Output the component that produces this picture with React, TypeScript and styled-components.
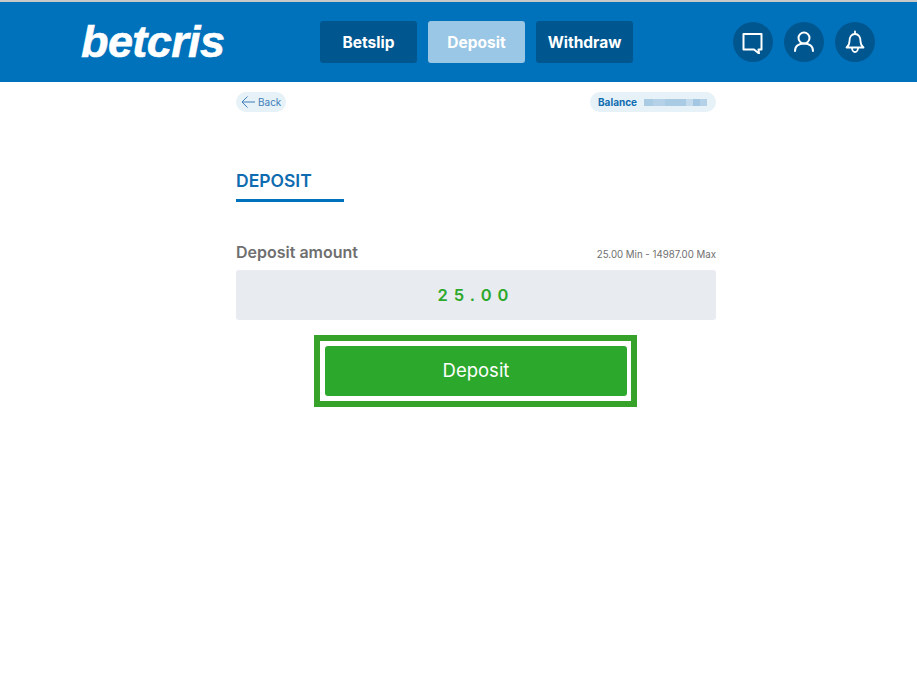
import * as React from 'react';
import styled, {createGlobalStyle} from 'styled-components';

const GlobalStyle = createGlobalStyle`
  html, body {
    margin: 0;
    padding: 0;
    background: #fff;
  }
  body {
    font-family: Inter, Roboto, "Liberation Sans", sans-serif;
  }
  * {
    box-sizing: border-box;
  }
`;

const TopEdge = styled.div`
  height: 2px;
  background: #c8c8c8;
`;

const Header = styled.header`
  height: 80px;
  background: #0072bc;
  display: flex;
  align-items: center;
  padding: 0 42px 0 81px;
`;

const Logo = styled.div`
  width: 239px;
  font-family: "Liberation Sans", sans-serif;
  font-size: 45px;
  font-weight: 700;
  font-style: italic;
  letter-spacing: -0.6px;
  color: #fff;
  line-height: 40px;
  -webkit-text-stroke: 0.6px #fff;
`;

const Nav = styled.nav`
  display: flex;
  gap: 11px;
`;

const NavButton = styled.button<{ $active?: boolean }>`
  width: 97px;
  height: 42px;
  border: none;
  border-radius: 3px;
  padding: 0;
  font-family: Inter, Roboto, sans-serif;
  font-size: 15.5px;
  font-weight: 700;
  color: #fff;
  background: ${props => (props.$active ? '#9ac7e5' : '#00578f')};
`;

const IconRow = styled.div`
  display: flex;
  gap: 11px;
  margin-left: auto;
`;

const IconCircle = styled.div`
  width: 40px;
  height: 40px;
  border-radius: 50%;
  background: #00578f;
  display: flex;
  align-items: center;
  justify-content: center;
  svg {
    display: block;
  }
`;

const Content = styled.main`
  width: 480px;
  margin-left: 236px;
  padding-top: 10px;
`;

const TopRow = styled.div`
  display: flex;
  justify-content: space-between;
`;

const BackPill = styled.div`
  width: 50px;
  height: 20px;
  border-radius: 10px;
  background: #e6f1f8;
  display: flex;
  align-items: center;
  gap: 3px;
  padding-left: 5px;
  font-size: 10px;
  color: #3f7fb8;
`;

const BalancePill = styled.div`
  width: 126px;
  height: 20px;
  border-radius: 10px;
  background: #e6f1f8;
  display: flex;
  align-items: center;
  padding-left: 8px;
  font-size: 10px;
  font-weight: 700;
  color: #0f6cb0;
`;

const BlurBlocks = styled.div`
  display: flex;
  height: 7px;
  margin-left: 7px;
`;

const BlurBlock = styled.span<{ $w: number; $c: string }>`
  width: ${props => props.$w}px;
  background: ${props => props.$c};
`;

const TitleBlock = styled.div`
  width: 108px;
  margin-top: 59px;
  height: 31px;
  border-bottom: 3px solid #0072bc;
`;

const Title = styled.h1`
  margin: 0;
  font-size: 17.5px;
  line-height: 20px;
  font-weight: 600;
  color: #0f6cb0;
`;

const AmountHead = styled.div`
  display: flex;
  justify-content: space-between;
  align-items: flex-end;
  margin-top: 41px;
  height: 27px;
  padding-bottom: 8px;
`;

const AmountLabel = styled.label`
  font-size: 16px;
  line-height: 19px;
  font-weight: 600;
  color: #6f6f6f;
`;

const Limits = styled.span`
  font-size: 9.7px;
  line-height: 14px;
  color: #6f6f6f;
`;

const AmountBox = styled.div`
  height: 50px;
  border-radius: 3px;
  background: #e8ebef;
  display: flex;
  align-items: center;
  justify-content: center;
  font-size: 16.5px;
  font-weight: 600;
  letter-spacing: 6px;
  color: #2ca82c;
`;

const SubmitWrap = styled.div`
  display: flex;
  justify-content: center;
  margin-top: 15px;
  padding-right: 1px;
`;

const SubmitOutline = styled.div`
  width: 323px;
  height: 72px;
  border: 6px solid #36a229;
  padding: 5px 4px 5px 5px;
  background: #fff;
`;

const SubmitButton = styled.button`
  display: block;
  width: 100%;
  height: 50px;
  border: none;
  border-radius: 3px;
  padding: 0 0 3px;
  background: #2ca82c;
  color: #fff;
  font-family: Inter, Roboto, sans-serif;
  font-size: 18.500px;
  font-weight: 400;
`;

const blurs: [number, string][] = [
  [9, '#a9cbe4'],
  [12, '#b4d1e8'],
  [21, '#a9cbe4'],
  [7, '#c3dbed'],
  [7, '#a3c7e2'],
  [7, '#b4d1e8'],
];

const App: React.FC = () => (
  <>
    <GlobalStyle />
    <TopEdge />
    <Header>
      <Logo>betcris</Logo>
      <Nav>
        <NavButton>Betslip</NavButton>
        <NavButton $active>Deposit</NavButton>
        <NavButton>Withdraw</NavButton>
      </Nav>
      <IconRow>
        <IconCircle>
          <svg width="24" height="24" viewBox="0 0 24 24" fill="none" stroke="#fff" strokeWidth="2" strokeLinejoin="round" strokeLinecap="round">
            <path d="M2.500 4h18v15.500h-3l.5 4-5-4H2.500z" />
          </svg>
        </IconCircle>
        <IconCircle>
          <svg width="22" height="22" viewBox="0 0 22 22" fill="none" stroke="#fff" strokeWidth="2" strokeLinecap="round">
            <circle cx="11" cy="7" r="5.500" />
            <path d="M2 20c0-5 4-7.500 9-7.500s9 2.500 9 7.500" />
          </svg>
        </IconCircle>
        <IconCircle>
          <svg width="22" height="24" viewBox="0 0 22 24" fill="none" stroke="#fff" strokeWidth="1.800" strokeLinejoin="round" strokeLinecap="round">
            <path d="M11 4c-3.500 0-5.500 3-5.500 7 0 3-1 5-3 6.500h17c-2-1.500-3-3.500-3-6.500 0-4-2-7-5.500-7z" />
            <path d="M11 1.500v2.500" />
            <path d="M8 18c0 2 1.300 4 3 4s3-2 3-4" />
          </svg>
        </IconCircle>
      </IconRow>
    </Header>
    <Content>
      <TopRow>
        <BackPill>
          <svg width="14" height="12" viewBox="0 0 14 12" fill="none" stroke="#3f7fb8" strokeWidth="1">
            <path d="M14 6H1M6.500.5 1 6l5.500 5.500" />
          </svg>
          Back
        </BackPill>
        <BalancePill>
          Balance
          <BlurBlocks>
            {blurs.map(([w, c], i) => (
              <BlurBlock key={i} $w={w} $c={c} />
            ))}
          </BlurBlocks>
        </BalancePill>
      </TopRow>
      <TitleBlock>
        <Title>DEPOSIT</Title>
      </TitleBlock>
      <AmountHead>
        <AmountLabel>Deposit amount</AmountLabel>
        <Limits>25.00 Min - 14987.00 Max</Limits>
      </AmountHead>
      <AmountBox>25.00</AmountBox>
      <SubmitWrap>
        <SubmitOutline>
          <SubmitButton>Deposit</SubmitButton>
        </SubmitOutline>
      </SubmitWrap>
    </Content>
  </>
);

export default App;
